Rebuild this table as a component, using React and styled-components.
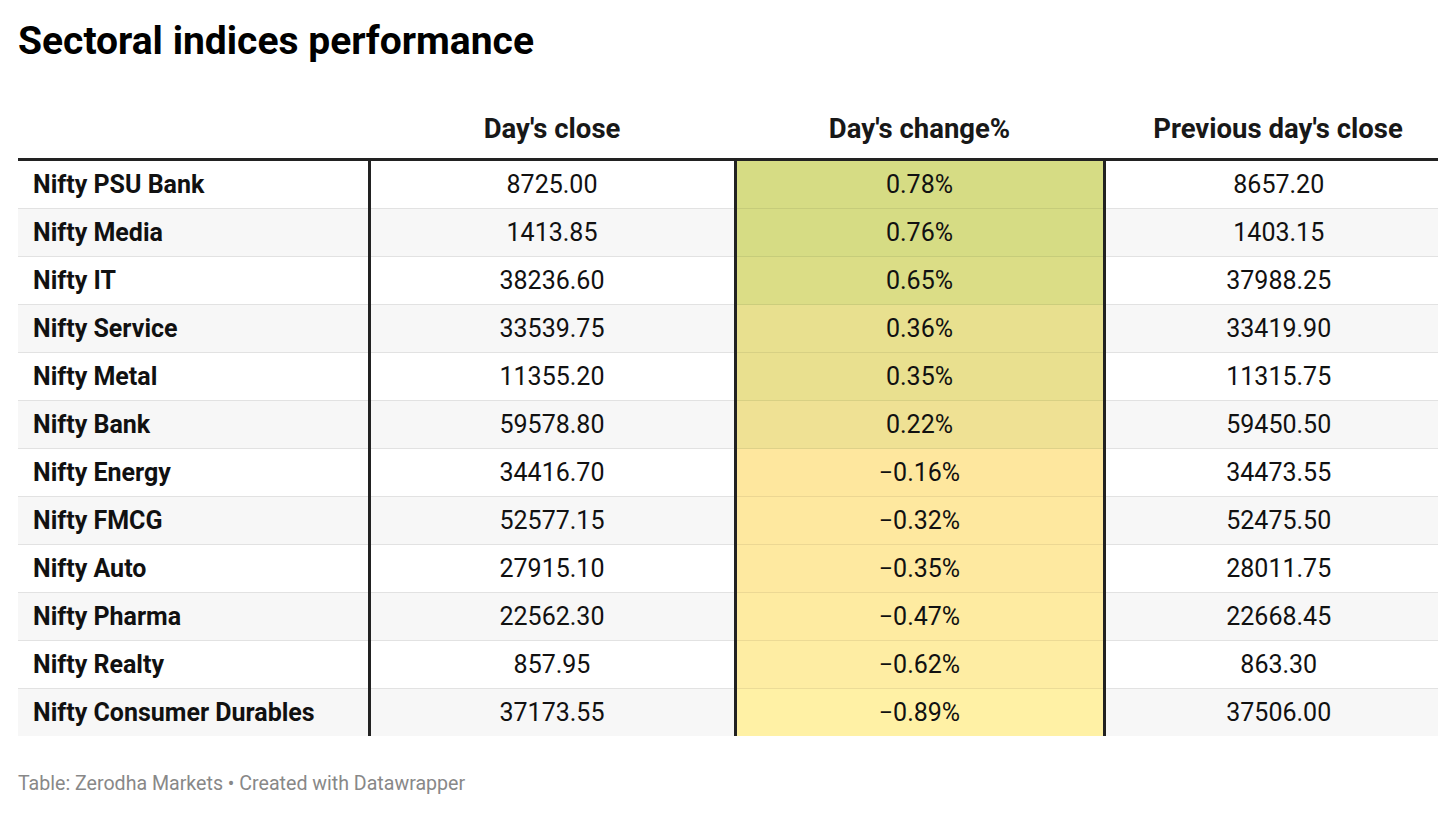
import React from "react";
import styled, { createGlobalStyle } from "styled-components";

const GlobalStyle = createGlobalStyle`
  body {
    margin: 0;
    background: #fff;
    font-family: Roboto, "Liberation Sans", sans-serif;
    color: #181818;
  }
`;

const Page = styled.div`
  width: 1456px;
  height: 813px;
  padding: 0 18px;
  box-sizing: border-box;
  overflow: hidden;
`;

const Title = styled.h1`
  margin: 0;
  padding-top: 18px;
  font-size: 39px;
  line-height: 46px;
  font-weight: 700;
  color: #000;
`;

const Table = styled.table`
  width: 1420px;
  margin-top: 35px;
  border-collapse: collapse;
  table-layout: fixed;
`;

const Th = styled.th`
  width: ${(p) => p.$w}px;
  height: 46px;
  padding: 0 0 13px ${(p) => p.$pl || 0}px;
  vertical-align: bottom;
  text-align: center;
  font-size: 27.5px;
  font-weight: 700;
  color: #181818;
  border-bottom: 3px solid #222;
`;

const Row = styled.tr`
  background: ${(p) => (p.$odd ? "#f7f7f7" : "#fff")};
`;

const NameCell = styled.td`
  height: 47px;
  padding: 0 0 0 15px;
  font-size: 25px;
  font-weight: 700;
  color: #111;
  border-bottom: ${(p) => (p.$last ? "none" : "1px solid #e2e2e2")};
`;

const NumCell = styled.td`
  height: 47px;
  padding: 0 0 0 ${(p) => p.$pl || 0}px;
  text-align: center;
  font-size: 25px;
  color: #111;
  border-left: 3px solid #222;
  background: ${(p) => p.$bg || "transparent"};
  border-bottom: ${(p) =>
    p.$last ? "none" : p.$bg ? "1px solid rgba(0,0,0,0.07)" : "1px solid #e2e2e2"};
`;

const Footer = styled.div`
  margin-top: 36px;
  font-size: 19.6px;
  color: #888;
`;

const rows = [
  ["Nifty PSU Bank", "8725.00", "0.78%", "8657.20", "#d6dc84"],
  ["Nifty Media", "1413.85", "0.76%", "1403.15", "#d6dc84"],
  ["Nifty IT", "38236.60", "0.65%", "37988.25", "#dbdd86"],
  ["Nifty Service", "33539.75", "0.36%", "33419.90", "#e8e08f"],
  ["Nifty Metal", "11355.20", "0.35%", "11315.75", "#e9e08f"],
  ["Nifty Bank", "59578.80", "0.22%", "59450.50", "#efe194"],
  ["Nifty Energy", "34416.70", "\u22120.16%", "34473.55", "#fee79e"],
  ["Nifty FMCG", "52577.15", "\u22120.32%", "52475.50", "#fee89f"],
  ["Nifty Auto", "27915.10", "\u22120.35%", "28011.75", "#fee9a0"],
  ["Nifty Pharma", "22562.30", "\u22120.47%", "22668.45", "#feeba1"],
  ["Nifty Realty", "857.95", "\u22120.62%", "863.30", "#feeda3"],
  ["Nifty Consumer Durables", "37173.55", "\u22120.89%", "37506.00", "#fff1a5"],
];

export default function App() {
  return (
    <Page>
      <GlobalStyle />
      <Title>Sectoral indices performance</Title>
      <Table>
        <thead>
          <tr>
            <Th $w={351}></Th>
            <Th $w={366}>Day's close</Th>
            <Th $w={369}>Day's change%</Th>
            <Th $w={320} $pl={14}>Previous day's close</Th>
          </tr>
        </thead>
        <tbody>
          {rows.map(([name, close, change, prev, bg], i) => {
            const last = i === rows.length - 1;
            return (
              <Row key={name} $odd={i % 2 === 1}>
                <NameCell $last={last}>{name}</NameCell>
                <NumCell $last={last}>{close}</NumCell>
                <NumCell $last={last} $bg={bg}>{change}</NumCell>
                <NumCell $last={last} $pl={14}>{prev}</NumCell>
              </Row>
            );
          })}
        </tbody>
      </Table>
      <Footer>Table: Zerodha Markets • Created with Datawrapper</Footer>
    </Page>
  );
}
